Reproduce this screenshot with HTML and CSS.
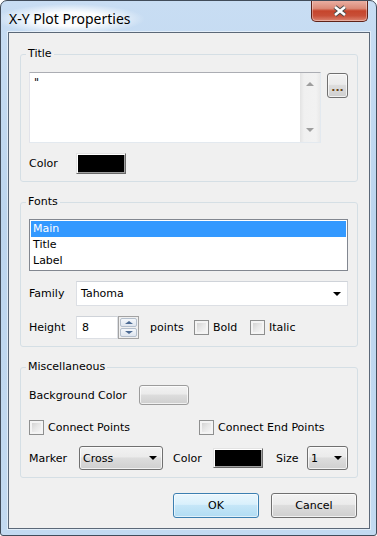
FILE: index.html
```html
<!DOCTYPE html>
<html>
<head>
    <title>X-Y Plot Properties</title>
    <link rel="stylesheet" href="styles.css">
</head>
<body>
    <div class="window">
        <div class="titlebar">
            <span class="caption">X-Y Plot Properties</span>
            <div class="close">
                <svg width="16" height="12" viewBox="0 0 16 12">
                    <path d="M3 2L13 10M13 2L3 10" stroke="#4b4b4b" stroke-width="4.6" fill="none"/>
                    <path d="M3 2L13 10M13 2L3 10" stroke="#fff" stroke-width="2.6" fill="none"/>
                </svg>
            </div>
        </div>

        <div class="client">
            <fieldset class="group">
                <legend>Title</legend>
                <div class="row first-row">
                    <div class="textbox">
                        <div class="textbox-text">"</div>
                        <div class="vscroll">
                            <span class="arrow-up"></span>
                            <span class="arrow-down"></span>
                        </div>
                    </div>
                    <button class="btn btn-dots">...</button>
                </div>
                <div class="row gap-row">
                    <span class="label">Color</span>
                    <span class="swatch"><span class="swatch-fill"></span></span>
                </div>
            </fieldset>

            <fieldset class="group">
                <legend>Fonts</legend>
                <div class="listbox">
                    <div class="list-item selected">Main</div>
                    <div class="list-item">Title</div>
                    <div class="list-item">Label</div>
                </div>
                <div class="row gap-row">
                    <span class="label">Family</span>
                    <div class="combo-edit">
                        <span>Tahoma</span>
                        <span class="arrow-black"></span>
                    </div>
                </div>
                <div class="row gap-row">
                    <span class="label">Height</span>
                    <div class="spin">
                        <div class="spin-text">8</div>
                        <div class="spin-buttons">
                            <span class="spin-btn"><span class="spin-up"></span></span>
                            <span class="spin-btn"><span class="spin-down"></span></span>
                        </div>
                    </div>
                    <span class="points">points</span>
                    <label class="check check-bold"><span class="box"></span>Bold</label>
                    <label class="check"><span class="box"></span>Italic</label>
                </div>
            </fieldset>

            <fieldset class="group group-last">
                <legend>Miscellaneous</legend>
                <div class="row first-row">
                    <span class="label label-wide">Background Color</span>
                    <button class="btn btn-bg"></button>
                </div>
                <div class="row check-row">
                    <label class="check check-connect"><span class="box"></span>Connect Points</label>
                    <label class="check"><span class="box"></span>Connect End Points</label>
                </div>
                <div class="row marker-row">
                    <span class="label label-marker">Marker</span>
                    <div class="dropdown dropdown-marker">
                        <span>Cross</span>
                        <span class="arrow-black"></span>
                    </div>
                    <span class="label label-color">Color</span>
                    <span class="swatch swatch-small"><span class="swatch-fill"></span></span>
                    <span class="label label-size">Size</span>
                    <div class="dropdown dropdown-size">
                        <span>1</span>
                        <span class="arrow-black"></span>
                    </div>
                </div>
            </fieldset>

            <div class="buttons">
                <button class="btn btn-action btn-default">OK</button>
                <button class="btn btn-action">Cancel</button>
            </div>
        </div>
    </div>
</body>
</html>
```

FILE: styles.css
```css
* {
    box-sizing: border-box;
}

body {
    margin: 0;
    background: #fff;
    font-family: "DejaVu Sans", Tahoma, sans-serif;
    font-size: 11px;
    color: #000;
}

.window {
    width: 377px;
    height: 536px;
    border: 1px solid #414c5a;
    border-radius: 7px 7px 3px 3px;
    background: linear-gradient(#c8ddf3, #bcd5ee 40%, #c3daf1);
    padding: 0 6px 6px 7px;
    display: flex;
    flex-direction: column;
    overflow: hidden;
}

.titlebar {
    height: 31px;
    display: flex;
    align-items: flex-start;
}

.caption {
    font-family: "Noto Sans", sans-serif;
    font-size: 14px;
    line-height: 20px;
    color: #000;
    margin: 3px 0 0 -13px;
    padding: 5px 14px;
    background: radial-gradient(closest-side, rgba(255,255,255,0.95) 45%, rgba(255,255,255,0));
}

.close {
    width: 57px;
    height: 22px;
    margin: -1px 2px 0 auto;
    border: 1px solid #5e2219;
    border-top: none;
    border-radius: 0 0 5px 5px;
    background: linear-gradient(#ebb3a7 0%, #db8a78 40%, #c6452c 52%, #c84f38 75%, #dc8672 100%);
    box-shadow: inset 0 0 0 1px rgba(255,255,255,0.35);
    display: flex;
    align-items: center;
    justify-content: center;
}

.client {
    flex: 1;
    background: #f0f0f0;
    border: 1px solid #5b6878;
    box-shadow: 0 0 0 1px rgba(255,255,255,0.5);
    padding: 14px 11px 10px 11px;
    display: flex;
    flex-direction: column;
}

.group {
    margin: 0 0 13px;
    border: 1px solid #d5dfe5;
    border-radius: 3px;
    padding: 10px 9px 7px 8px;
    min-width: 0;
}

.group-last {
    margin-bottom: 15px;
}

.group legend {
    padding: 0 2px;
    margin-left: -3px;
    line-height: 14px;
}

.row {
    display: flex;
    align-items: center;
}

.first-row {
    margin-top: 1px;
}

.gap-row {
    margin-top: 10px;
}

.label {
    width: 47px;
    flex-shrink: 0;
}

/* title text box */
.textbox {
    width: 292px;
    height: 71px;
    border: 1px solid;
    border-color: #abadb3 #e3e9ef #e3e9ef #e2e3ea;
    background: #fff;
    display: flex;
}

.textbox-text {
    flex: 1;
    padding: 3px 4px;
    line-height: 14px;
}

.vscroll {
    width: 20px;
    background: linear-gradient(90deg, #e3e3e3, #f0f0f0 20%, #f2f2f2 80%, #e9e9e9);
    display: flex;
    flex-direction: column;
    justify-content: space-between;
    align-items: center;
    padding: 9px 0 10px;
}

.arrow-up {
    border-left: 4px solid transparent;
    border-right: 4px solid transparent;
    border-bottom: 4px solid #9e9e9e;
}

.arrow-down {
    border-left: 4px solid transparent;
    border-right: 4px solid transparent;
    border-top: 4px solid #9e9e9e;
}

/* buttons */
.btn {
    font: inherit;
    color: #000;
    border: 1px solid #707070;
    border-radius: 3px;
    background: linear-gradient(#f2f2f2, #ebebeb 45%, #dddddd 50%, #cfcfcf);
    box-shadow: inset 0 0 0 1px rgba(255,255,255,0.7);
    padding: 0;
}

.btn-dots {
    width: 21px;
    height: 25px;
    margin-left: 6px;
    align-self: flex-start;
    margin-top: 1px;
    color: #6a4516;
    font-weight: bold;
    padding-top: 3px;
}

.btn-bg {
    width: 50px;
    height: 20px;
    border-color: #9c9c9c;
}

.buttons {
    display: flex;
    justify-content: flex-end;
    gap: 12px;
    padding-right: 1px;
}

.btn-action {
    width: 86px;
    height: 25px;
}

.btn-default {
    border-color: #3c7fb1;
    background: linear-gradient(#eaf6fd, #d9f0fc 45%, #c5e6f8 50%, #b1dcf3);
    box-shadow: inset 0 0 0 1px rgba(255,255,255,0.6);
}

/* colour swatch */
.swatch {
    display: block;
    width: 50px;
    height: 21px;
    border: 1px solid;
    border-color: #e3e3e3 #696969 #696969 #e3e3e3;
    padding: 1px;
    box-shadow: inset 1px 1px 0 #fff, inset -1px -1px 0 #a0a0a0;
    background: #f0f0f0;
}

.swatch-fill {
    display: block;
    height: 100%;
    background: #000;
}

.swatch-small {
    height: 20px;
}

/* list box */
.listbox {
    height: 52px;
    border: 1px solid #828790;
    background: #fff;
    padding: 1px;
}

.list-item {
    height: 16px;
    line-height: 16px;
    padding-left: 2px;
}

.list-item.selected {
    background: #3399ff;
    color: #fff;
}

/* combo boxes */
.combo-edit {
    flex: 1;
    height: 25px;
    border: 1px solid #dcdfe4;
    border-top-color: #cfd3d9;
    background: #fff;
    display: flex;
    align-items: center;
    justify-content: space-between;
    padding: 0 6px 0 4px;
}

.arrow-black {
    border-left: 4px solid transparent;
    border-right: 4px solid transparent;
    border-top: 4px solid #000;
}

.dropdown {
    height: 24px;
    border: 1px solid #707070;
    border-radius: 3px;
    background: linear-gradient(#f2f2f2, #ebebeb 45%, #dddddd 50%, #cfcfcf);
    box-shadow: inset 0 0 0 1px rgba(255,255,255,0.7);
    display: flex;
    align-items: center;
    justify-content: space-between;
    padding: 0 5px 0 3px;
}

.dropdown-marker {
    width: 84px;
    margin-right: 10px;
}

.dropdown-size {
    width: 41px;
}

/* spin edit */
.spin {
    width: 63px;
    height: 23px;
    display: flex;
}

.spin-text {
    flex: 1;
    border: 1px solid #dcdfe4;
    border-top-color: #cfd3d9;
    background: #fff;
    padding-left: 5px;
    display: flex;
    align-items: center;
}

.spin-buttons {
    width: 21px;
    display: flex;
    flex-direction: column;
    border: 1px solid #a3a3a3;
    background: #f0f0f0;
    gap: 1px;
    padding: 1px;
}

.spin-btn {
    flex: 1;
    display: flex;
    align-items: center;
    justify-content: center;
    border: 1px solid #b4bfcd;
    border-radius: 2px;
    background: linear-gradient(#f4f7fb, #dfe6ef);
}

.spin-up {
    border-left: 4px solid transparent;
    border-right: 4px solid transparent;
    border-bottom: 3px solid #4c6a93;
}

.spin-down {
    border-left: 4px solid transparent;
    border-right: 4px solid transparent;
    border-top: 3px solid #4c6a93;
}

.points {
    margin-left: 11px;
    width: 44px;
}

/* check boxes */
.check {
    display: flex;
    align-items: center;
}

.box {
    width: 15px;
    height: 15px;
    border: 1px solid #8e8f8f;
    background: linear-gradient(135deg, #cbcbcb, #e8e8e8 50%, #fbfbfb);
    box-shadow: inset 0 0 0 2px #f4f4f4;
    margin-right: 4px;
}

.check-bold {
    width: 56px;
}

.check-row {
    margin-top: 14px;
    height: 16px;
}

.check-connect {
    width: 170px;
}

.label-wide {
    width: 110px;
}

.marker-row {
    margin-top: 11px;
}

.label-marker {
    width: 50px;
}

.label-color {
    width: 40px;
}

.label-size {
    width: 31px;
    margin-left: 13px;
}
```
